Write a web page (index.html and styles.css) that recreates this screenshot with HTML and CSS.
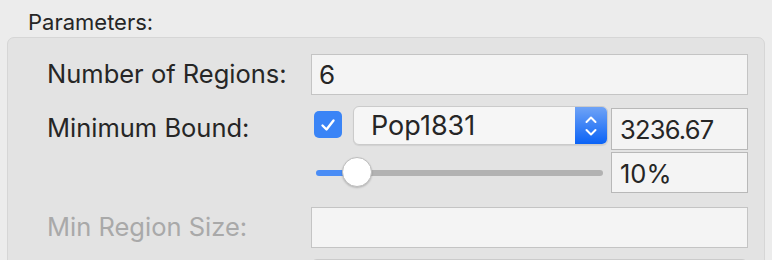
FILE: index.html
```html
<!DOCTYPE html>
<html lang="en">
<head>
  <meta charset="UTF-8">
  <title>Parameters</title>
  <link rel="stylesheet" href="styles.css">
</head>
<body>

  <div class="title">Parameters:</div>

  <div class="group">
    <div class="row">
      <label class="lbl">Number of Regions:</label>
      <div class="field">6</div>
    </div>

    <div class="row bound">
      <label class="lbl">Minimum Bound:</label>
      <div class="bound-grid">
        <div class="bound-top">
          <span class="check">
            <svg width="16" height="14" viewBox="0 0 16 14"><path d="M2.5 7.5 L6.5 11.5 L13.5 2.5" fill="none" stroke="#fff" stroke-width="2.4" stroke-linecap="round" stroke-linejoin="round"/></svg>
          </span>
          <div class="popup">
            <span class="popup-text">Pop1831</span>
            <span class="stepper">
              <svg width="14" height="26" viewBox="0 0 14 26"><path d="M2.5 9 L7 4.5 L11.5 9 M2.5 17 L7 21.5 L11.5 17" fill="none" stroke="#fff" stroke-width="2" stroke-linecap="round" stroke-linejoin="round"/></svg>
            </span>
          </div>
        </div>
        <div class="field val">3236.67</div>
        <div class="slider">
          <div class="track">
            <span class="fill"></span>
            <span class="rest"></span>
          </div>
          <span class="knob"></span>
        </div>
        <div class="field val pct">10%</div>
      </div>
    </div>

    <div class="row">
      <label class="lbl disabled">Min Region Size:</label>
      <div class="field"></div>
    </div>

    <div class="row">
      <label class="lbl"></label>
      <div class="popup wide">
        <span class="popup-text"></span>
        <span class="stepper"></span>
      </div>
    </div>
  </div>

</body>
</html>
```

FILE: styles.css
```css
body { margin: 0; background: #ececec; font-family: Inter, "Noto Sans", sans-serif; color: #262626; overflow: hidden; }
.title { height: 37px; box-sizing: border-box; padding: 9px 0 0 28px; font-size: 22px; line-height: 26px; }
.group { margin-left: 7px; width: 758px; height: 260px; box-sizing: border-box; padding: 15px 0 0 39px; background: #e3e3e3; border: 1px solid #d6d6d6; border-radius: 7px; }
.row { display: grid; grid-template-columns: 264px 437px; align-items: center; margin-bottom: 11px; }
.row.bound { align-items: start; margin-bottom: 13px; }
.lbl { font-size: 25.5px; line-height: 42px; white-space: nowrap; }
.bound .lbl { line-height: 44px; }
.lbl.disabled { color: #a9a9a9; }
.field { height: 41px; box-sizing: border-box; background: #f4f4f4; border: 1px solid #c4c4c4; padding-left: 7px; font-size: 26px; line-height: 40px; }
.bound-grid { display: grid; grid-template-columns: 297px 137px; grid-template-rows: 44px 41px; column-gap: 3px; row-gap: 2px; }
.bound-top { display: flex; align-items: flex-start; gap: 11px; }
.check { width: 28px; height: 27px; margin: 5px 0 0 3px; border-radius: 5px; background: #3a84f6; display: flex; align-items: center; justify-content: center; }
.popup { display: flex; width: 255px; height: 39px; box-sizing: border-box; background: #f6f6f6; border: 1px solid #cbcbcb; border-radius: 6px; box-shadow: 0 1px 1px rgba(0,0,0,0.08); overflow: hidden; }
.popup-text { flex: 1; padding-left: 17px; font-size: 27px; line-height: 38px; }
.stepper { width: 32px; background: linear-gradient(#6fa3f6, #0b63f6); display: flex; align-items: center; justify-content: center; }
.popup.wide { width: 437px; background: #fbfbfb; }
.val { margin-top: 2px; height: 42px; border-color: #b8b8b8; font-size: 25.5px; letter-spacing: -0.8px; line-height: 42px; padding-left: 8px; }
.pct { margin-top: 0; height: 41px; line-height: 41px; letter-spacing: 0; }
.slider { position: relative; display: flex; align-items: center; padding: 0 5px 0 5px; }
.track { display: flex; width: 287px; height: 6px; }
.fill { width: 34px; background: #4a8df6; border-radius: 3px 0 0 3px; }
.rest { flex: 1; background: #b2b2b2; border-radius: 0 3px 3px 0; }
.knob { position: absolute; left: 31px; top: 5px; width: 30px; height: 30px; box-sizing: border-box; border-radius: 50%; background: #fff; border: 1px solid #bdbdbd; box-shadow: 0 1px 2px rgba(0,0,0,0.2); }
```
